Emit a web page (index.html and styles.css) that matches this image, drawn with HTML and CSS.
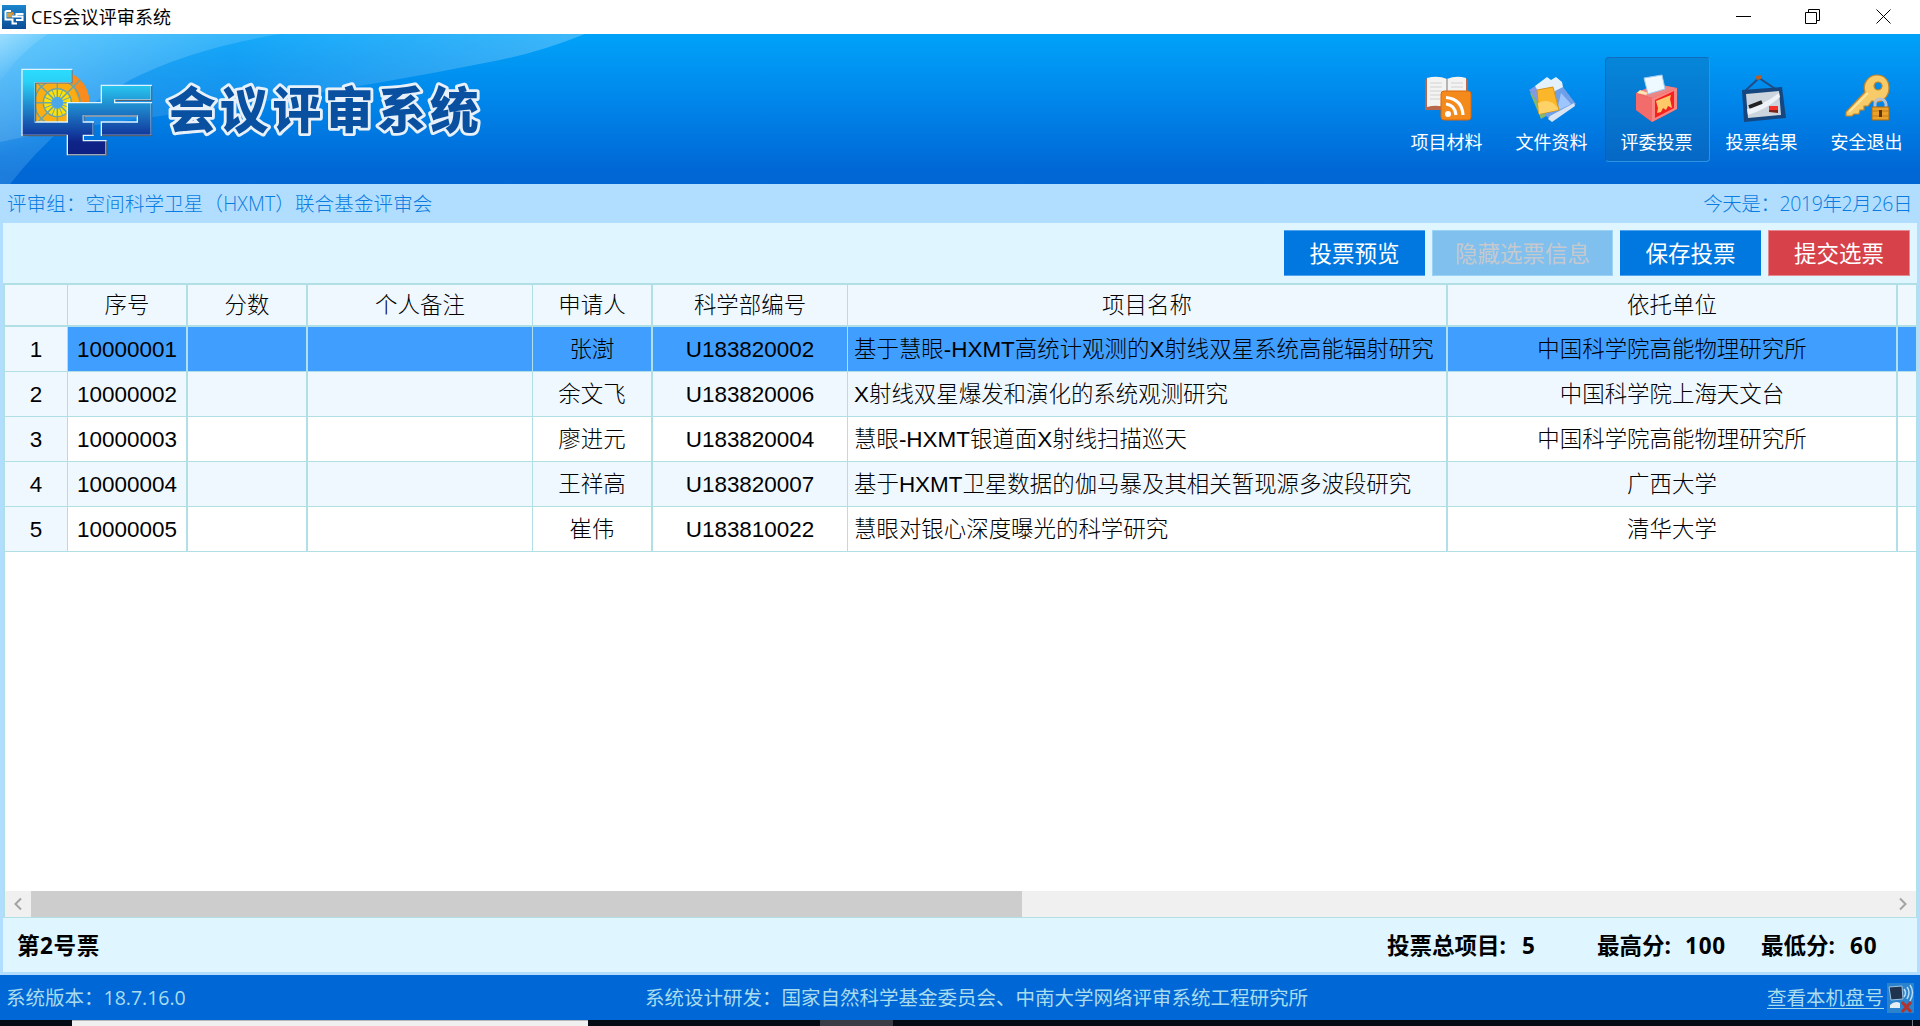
FILE: index.html
```html
<!DOCTYPE html>
<html lang="zh-CN">
<head>
<meta charset="utf-8">
<title>CES会议评审系统</title>
<link rel="stylesheet" href="styles.css">
</head>
<body>
<div class="titlebar">
  <svg class="app-icon" width="24" height="24" viewBox="0 0 24 24"><defs><linearGradient id="ai" x1="0" y1="0" x2="0" y2="1"><stop offset="0" stop-color="#1b86cc"/><stop offset="1" stop-color="#0a4c96"/></linearGradient></defs><rect width="24" height="24" fill="url(#ai)"/><path d="M3.500 6H9M3.500 6V14.500H10.500V18.500H15M10 11.500H14.500V9H21.500M15 11.500H20.500V15H14" fill="none" stroke="#fff" stroke-width="2"/><rect x="5" y="7.500" width="5" height="5" fill="#c9a24a"/><path d="M9.500 6.500l2 1 .8 2.500h-2z" fill="#e58a2c"/></svg>
  <span class="app-title">CES会议评审系统</span>
  <svg class="win-controls" width="220" height="34" viewBox="0 0 220 34" fill="none" stroke="#000"><path d="M36 16.500H51M105.500 12.500H116.500V23.500H105.500ZM108.500 12V9.500H119.500V20.500H117M176.500 9.500L190.500 23.500M190.500 9.500L176.500 23.500"/></svg>
</div>

<header class="banner">
  <svg class="banner-art" width="600" height="150" viewBox="0 0 600 150">
    <defs>
      <linearGradient id="sw1" x1="0" y1="0" x2="1" y2="0"><stop offset="0" stop-color="#fff" stop-opacity=".15"/><stop offset=".4" stop-color="#fff" stop-opacity=".08"/><stop offset="1" stop-color="#fff" stop-opacity=".24"/></linearGradient>
      <linearGradient id="sw2" x1="0" y1="0" x2=".8" y2="1"><stop offset="0" stop-color="#8fdcff" stop-opacity=".6"/><stop offset=".5" stop-color="#8fd6ff" stop-opacity=".22"/><stop offset="1" stop-color="#8fd6ff" stop-opacity=".12"/></linearGradient>
      <linearGradient id="sw3" x1="0" y1="0" x2=".7" y2="1"><stop offset="0" stop-color="#fff" stop-opacity=".35"/><stop offset=".7" stop-color="#fff" stop-opacity="0"/></linearGradient>
    </defs>
    <path d="M0 0H585Q540 18 500 26Q330 60 160 82Q60 95 0 108Z" fill="url(#sw1)"/>
    <path d="M0 0H280Q190 15 130 46Q60 86 10 150H0Z" fill="url(#sw2)"/>
    <path d="M0 0H48Q20 18 0 48Z" fill="url(#sw3)"/>
  </svg>
  <svg class="logo" width="500" height="120" viewBox="0 0 1500 360">
    <defs>
      <linearGradient id="lg" x1="0" y1="58" x2="0" y2="314" gradientUnits="userSpaceOnUse"><stop offset="0" stop-color="#2bdcff"/><stop offset=".15" stop-color="#29d0f5"/><stop offset=".45" stop-color="#1f86cc"/><stop offset=".72" stop-color="#1344a4"/><stop offset=".85" stop-color="#102489"/><stop offset="1" stop-color="#0e1f82"/></linearGradient>
      <clipPath id="wheelclip"><path d="M106 98H215V58H290V200H250V216H106Z"/></clipPath>
    </defs>
    <g clip-path="url(#wheelclip)">
      <circle cx="172" cy="158" r="97" fill="#f98c1c"/>
      <path d="M106 98H215L240 158V216H106Z" fill="#fbae12"/>
      <circle cx="172" cy="158" r="42" fill="#ffe004"/>
      <g stroke="#6fa5a0" stroke-width="4.500" fill="none"><circle cx="172" cy="158" r="42"/><circle cx="172" cy="158" r="68"/><path d="M172 60V256M74 158H270M103 89L241 227M241 89L103 227"/><path d="M156 120L188 196M188 120L156 196M134 142L210 174M210 142L134 174" stroke-width="3"/></g>
      <circle cx="172" cy="158" r="18" fill="#4aa8e8"/>
    </g>
    <path d="M66 58H215V98H106V216H202V158H304V106H454V150H344V158H454V256H304V216H412V198H250V216H280V256H250V272H318V314H202V256H66Z" fill="url(#lg)" stroke="#dff3ff" stroke-width="4"/>
    <path d="M216 60V99H107V215M455 108V151H346M455 160V257H306M281 218V256M412 198H252V214M319 274V315H204M200 257H68" fill="none" stroke="#56616c" stroke-width="3.500"/>
    <text class="logo-text" x="502" y="234" textLength="934" lengthAdjust="spacing">会议评审系统</text>
  </svg>
  <nav class="nav">
    <a class="nav-item">
      <svg width="54" height="54" viewBox="0 0 54 54"><path d="M5 8L7 5H24L27 7 30 5H46L48 8V37H5Z" fill="#b8674c"/><path d="M7 5Q18 2 27 6Q36 2 46 5V33Q36 32 27 35Q18 31 7 34Z" fill="#f3f3f1"/><path d="M27 6V34" stroke="#b5b5b5" stroke-width="2"/><path d="M10 10H22M10 14H22M10 18H22M10 22H20M10 26H20M31 10H43M31 14H43" stroke="#ddd" stroke-width="1.500"/><rect x="21" y="18" width="30" height="29" rx="3" fill="#f58a1c" stroke="#d9690d"/><circle cx="28" cy="41" r="3" fill="#fff"/><path d="M26 31Q35 32 36 42M26 24.500Q42 26 43 42" fill="none" stroke="#fff" stroke-width="3.200"/></svg>
      <span>项目材料</span>
    </a>
    <a class="nav-item">
      <svg width="54" height="54" viewBox="0 0 54 54"><path d="M5 20L14 14 30 38 16 46Z" fill="#85b56e"/><path d="M4 17L20 7 30 12 12 28Z" fill="#7f9be6"/><path d="M10 13L22 4 26 7 31 4 37 9 42 34 20 30Z" fill="#e3f1fd"/><path d="M30 18L38 14 51 31 26 47 20 42Z" fill="#6f9fe6"/><path d="M36 20L46 31 32 38Z" fill="#9dc6ff"/><path d="M25 43L49 30 50 33 27 49 23 46Z" fill="#d8e3f3"/><path d="M12 17L28 14 34 37 14 41Z" fill="#fbb62a" stroke="#d5931a"/><path d="M13 30Q25 24 33 35L33 37 14 41Z" fill="#ffd267"/></svg>
      <span>文件资料</span>
    </a>
    <a class="nav-item active">
      <svg width="54" height="54" viewBox="0 0 54 54"><path d="M6 20L26 11 47 15 47 36 22 49 6 37Z" fill="#d94a52"/><path d="M6 20L26 11 47 15 22 25Z" fill="#ee8585"/><path d="M6 20L22 25V49L6 37Z" fill="#f26c6c"/><path d="M22 25L47 15V36L22 49Z" fill="#f98583"/><path d="M25 27L44 18V35L25 45Z" fill="#f6211f"/><path d="M26 28L41 22 40 26 42 35 38 33 36 37 33 35 31 39 27 40 28 35Z" fill="#ffc96a"/><path d="M10 17L18 20 16 22 7 20Z" fill="#ffe5ae"/><path d="M14 5L32 2 35 16 18 21Z" fill="#eef8ff" stroke="#9cccf4"/></svg>
      <span>评委投票</span>
    </a>
    <a class="nav-item">
      <svg width="54" height="54" viewBox="0 0 54 54"><path d="M10 18L24 5 42 17" fill="none" stroke="#234b83" stroke-width="2"/><path d="M20 3L27 2 26 6 22 7Z" fill="#b3602b"/><path d="M7 17L47 14 51 45 9 49Z" fill="#164680"/><path d="M11 21L44 18 46 42 13 45Z" fill="#ccd5dd"/><path d="M12 36Q28 32 44 20L45 24Q32 36 13 42Z" fill="#eef3f8"/><path d="M14 34L27 29" stroke="#222" stroke-width="4"/><path d="M34 33H43V39H34Z" fill="#f5322a"/><path d="M34 37H43V40L34 39Z" fill="#7c2419"/></svg>
      <span>投票结果</span>
    </a>
    <a class="nav-item">
      <svg width="54" height="54" viewBox="0 0 54 54"><path fill-rule="evenodd" d="M37 2C45 2 49 8 49 15 49 23 43 29 36 29L32 28 28 33H24V37H20L19 41H14L12 43H6V39L25 19C22 10 29 2 37 2ZM38 9a4 4 0 1 0 .1 0Z" fill="#f6cb68" stroke="#c0852a" stroke-width="1.200"/><path d="M9 39L28 20" stroke="#ffe7a0" stroke-width="2"/><path d="M35 36V31Q35 26 40 26T46 31V36" fill="none" stroke="#b9c0cc" stroke-width="3"/><rect x="32" y="34" width="17" height="13" fill="#eba22c" stroke="#a9690c"/><path d="M32 38H49M32 43H49" stroke="#c57d16"/><path d="M40.500 37V44" stroke="#5b3507" stroke-width="3"/></svg>
      <span>安全退出</span>
    </a>
  </nav>
</header>

<div class="info"><span class="group-name">评审组：空间科学卫星（HXMT）联合基金评审会</span><span class="today">今天是：2019年2月26日</span></div>

<main class="panel">
  <div class="toolbar">
    <button class="btn">投票预览</button>
    <button class="btn wide disabled">隐藏选票信息</button>
    <button class="btn">保存投票</button>
    <button class="btn danger">提交选票</button>
  </div>
  <div class="grid-view">
    <div class="row head"><div></div><div>序号</div><div>分数</div><div>个人备注</div><div>申请人</div><div>科学部编号</div><div>项目名称</div><div>依托单位</div><div></div></div>
    <div class="row selected"><div>1</div><div>10000001</div><div></div><div></div><div>张澍</div><div>U183820002</div><div class="name">基于慧眼-HXMT高统计观测的X射线双星系统高能辐射研究</div><div>中国科学院高能物理研究所</div><div></div></div>
    <div class="row alt"><div>2</div><div>10000002</div><div></div><div></div><div>余文飞</div><div>U183820006</div><div class="name">X射线双星爆发和演化的系统观测研究</div><div>中国科学院上海天文台</div><div></div></div>
    <div class="row"><div>3</div><div>10000003</div><div></div><div></div><div>廖进元</div><div>U183820004</div><div class="name">慧眼-HXMT银道面X射线扫描巡天</div><div>中国科学院高能物理研究所</div><div></div></div>
    <div class="row alt"><div>4</div><div>10000004</div><div></div><div></div><div>王祥高</div><div>U183820007</div><div class="name">基于HXMT卫星数据的伽马暴及其相关暂现源多波段研究</div><div>广西大学</div><div></div></div>
    <div class="row"><div>5</div><div>10000005</div><div></div><div></div><div>崔伟</div><div>U183810022</div><div class="name">慧眼对银心深度曝光的科学研究</div><div>清华大学</div><div></div></div>
    <div class="scrollbar">
      <svg width="26" height="26" viewBox="0 0 26 26"><path d="M16 7.500L10.500 13 16 18.500" fill="none" stroke="#a3a3a3" stroke-width="2"/></svg>
      <div class="thumb"></div>
      <svg class="arrow-right" width="26" height="26" viewBox="0 0 26 26"><path d="M10 7.500L15.500 13 10 18.500" fill="none" stroke="#a3a3a3" stroke-width="2"/></svg>
    </div>
  </div>
  <div class="summary">
    <span class="ballot">第2号票</span>
    <span class="total">投票总项目:</span><span class="total-value">5</span>
    <span class="max">最高分:</span><span class="max-value">100</span>
    <span class="min">最低分:</span><span class="min-value">60</span>
  </div>
</main>

<footer class="status">
  <span class="version">系统版本：18.7.16.0</span>
  <span class="credit">系统设计研发：国家自然科学基金委员会、中南大学网络评审系统工程研究所</span>
  <span class="disk"><a class="disk-link">查看本机盘号</a><svg width="27" height="30" viewBox="0 0 27 30"><rect width="27" height="30" fill="#2b83cd"/><path d="M2 4L15 3 16 16 4 17Z" fill="#20344f" stroke="#9cc4e6"/><path d="M3 22Q8 17 13 20V25H3Z" fill="#e6eef5"/><path d="M17 6Q20 10 17 14M20 4Q24 9 20 16M23 2Q28 9 23 18" fill="none" stroke="#b8dcf4" stroke-width="1.500"/><path d="M15 19L24 29M24 19L15 29" stroke="#b3322c" stroke-width="3"/></svg></span>
</footer>
<div class="taskbar"><div class="task-light"></div><div class="task-gray"></div><div class="task-line"></div></div>
</body>
</html>
```
FILE: styles.css
```css
* { box-sizing: border-box; }
body {
  margin: 0;
  width: 1920px;
  height: 1026px;
  overflow: hidden;
  display: flex;
  flex-direction: column;
  background: #b1deff;
  font-family: "Open Sans", "Noto Sans CJK SC", sans-serif;
  color: #000;
  white-space: nowrap;
}
svg { display: block; flex: none; }

.titlebar { height: 34px; background: #fff; display: flex; align-items: center; padding-left: 2px; }
.app-title { margin-left: 5px; font: 18px/34px "Open Sans", "Noto Sans CJK SC", sans-serif; letter-spacing: .1px; }
.win-controls { margin-left: auto; }

.banner {
  position: relative;
  height: 150px;
  display: flex;
  justify-content: space-between;
  align-items: flex-start;
  background: linear-gradient(#00a2f9, #0086ea 45%, #0067d5 92%, #0066d4);
}
.banner-art { position: absolute; left: 0; top: 0; }
.logo { position: relative; margin-top: 16px; }
.logo-text {
  font: 900 146px "Noto Sans CJK SC", sans-serif;
  fill: #0a50a0;
  stroke: #e8f1fa;
  stroke-width: 17px;
  stroke-linejoin: round;
  paint-order: stroke;
}
.nav { display: flex; }
.nav { padding-top: 23px; }
.nav-item {
  width: 105px;
  height: 105px;
  padding: 15px 2px 0 0;
  display: flex;
  flex-direction: column;
  align-items: center;
  border: 1px solid transparent;
  border-radius: 4px;
  color: #fff;
  font-size: 18px;
}
.nav-item span { line-height: 30px; }
.nav-item.active {
  background: rgba(20, 95, 160, .32);
  border-color: rgba(20, 90, 170, .6) #2f93e4 #2f93e4 rgba(20, 90, 170, .6);
}

.info { height: 39px; display: flex; justify-content: space-between; padding: 0 8px 0 7px; font: 300 19.5px/39px "Open Sans", "Noto Sans CJK SC", sans-serif; color: #0a7be0; }
.group-name { letter-spacing: .15px; }
.today { letter-spacing: -.4px; }

.panel { width: 1914px; margin-left: 3px; height: 749px; background: #dff5ff; display: flex; flex-direction: column; }
.toolbar { height: 60px; padding: 7px 7px 0 0; display: flex; justify-content: flex-end; gap: 7px; }
.btn {
  width: 141px;
  height: 46px;
  padding: 2px 0 0;
  border: 1px solid #4ea4ec;
  border-width: 1px 0;
  background: #0078e0;
  color: #fff;
  font: 22.500px/42px "Open Sans", "Noto Sans CJK SC", sans-serif;
}
.btn.wide { width: 181px; }
.btn.disabled { background: #80c0ef; border: 1px solid #9dd2f7; color: #c5c9ce; }
.btn.danger { width: 142px; background: #d74149; border: 1px solid #e58a92; }

.grid-view {
  height: 635px;
  border: solid #b0e0e6;
  border-width: 2px 1px 1px 2px;
  background: #fff;
  display: flex;
  flex-direction: column;
}
.row {
  display: grid;
  grid-template-columns: 63px 120px 120px 225px 120px 195px 600px 450px 18px;
  height: 45px;
  font: 22.450px/45px "Liberation Sans", "Noto Sans CJK SC", sans-serif;
  font-weight: 300;
  text-align: center;
}
.row > div { border-right: 1px solid #b0e0e6; border-bottom: 1px solid #b0e0e6; overflow: hidden; }
.row > div:nth-child(2), .row > div:nth-child(3), .row > div:nth-child(5), .row > div:nth-child(7), .row > div:nth-child(8) { border-right-width: 2px; }
.row > div:last-child { border-right: 0; }
.row.head { height: 42px; background: #f0f8ff; line-height: 41px; }
.row.head > div { border-bottom-width: 2px; }
.row.alt, .row > div:first-child { background: #f0f8ff; }
.row.selected { background: #409eff; }
.row > .name { text-align: left; padding-left: 6px; }

.scrollbar { margin-top: auto; height: 26px; background: #f0f0f0; display: flex; }
.thumb { width: 991px; background: #cdcdcd; }
.arrow-right { margin-left: auto; }

.summary { height: 54px; padding-left: 14px; display: flex; font: bold 22.500px/56px "Open Sans", "Noto Sans CJK SC", sans-serif; }
.ballot { width: 1370px; letter-spacing: .6px; }
.total { width: 135px; }
.total-value { width: 75px; }
.max { width: 88px; }
.max-value { width: 76px; letter-spacing: .8px; }
.min { width: 89px; }
.min-value { letter-spacing: .8px; }

.status { margin-top: 3px; height: 45px; flex: none; display: grid; grid-template-columns: 645px 1fr auto; padding: 0 6px 0 0; background: #0067d6; color: #a9dcec; font: 19.500px/45px "Open Sans", "Noto Sans CJK SC", sans-serif; }
.version { padding-left: 6px; }
.disk { display: flex; align-items: center; gap: 3px; }
.disk-link { text-decoration: underline; text-underline-offset: 3px; }

.taskbar { height: 6px; flex: none; display: flex; background: #050b14; }
.task-light { width: 516px; margin-left: 72px; background: #f0f0f0; border-top: 1px solid #b8b8b8; }
.task-gray { width: 73px; margin-left: 232px; background: #3b3d46; }
.task-line { width: 1px; margin-left: 1019px; background: #777b82; }
```
